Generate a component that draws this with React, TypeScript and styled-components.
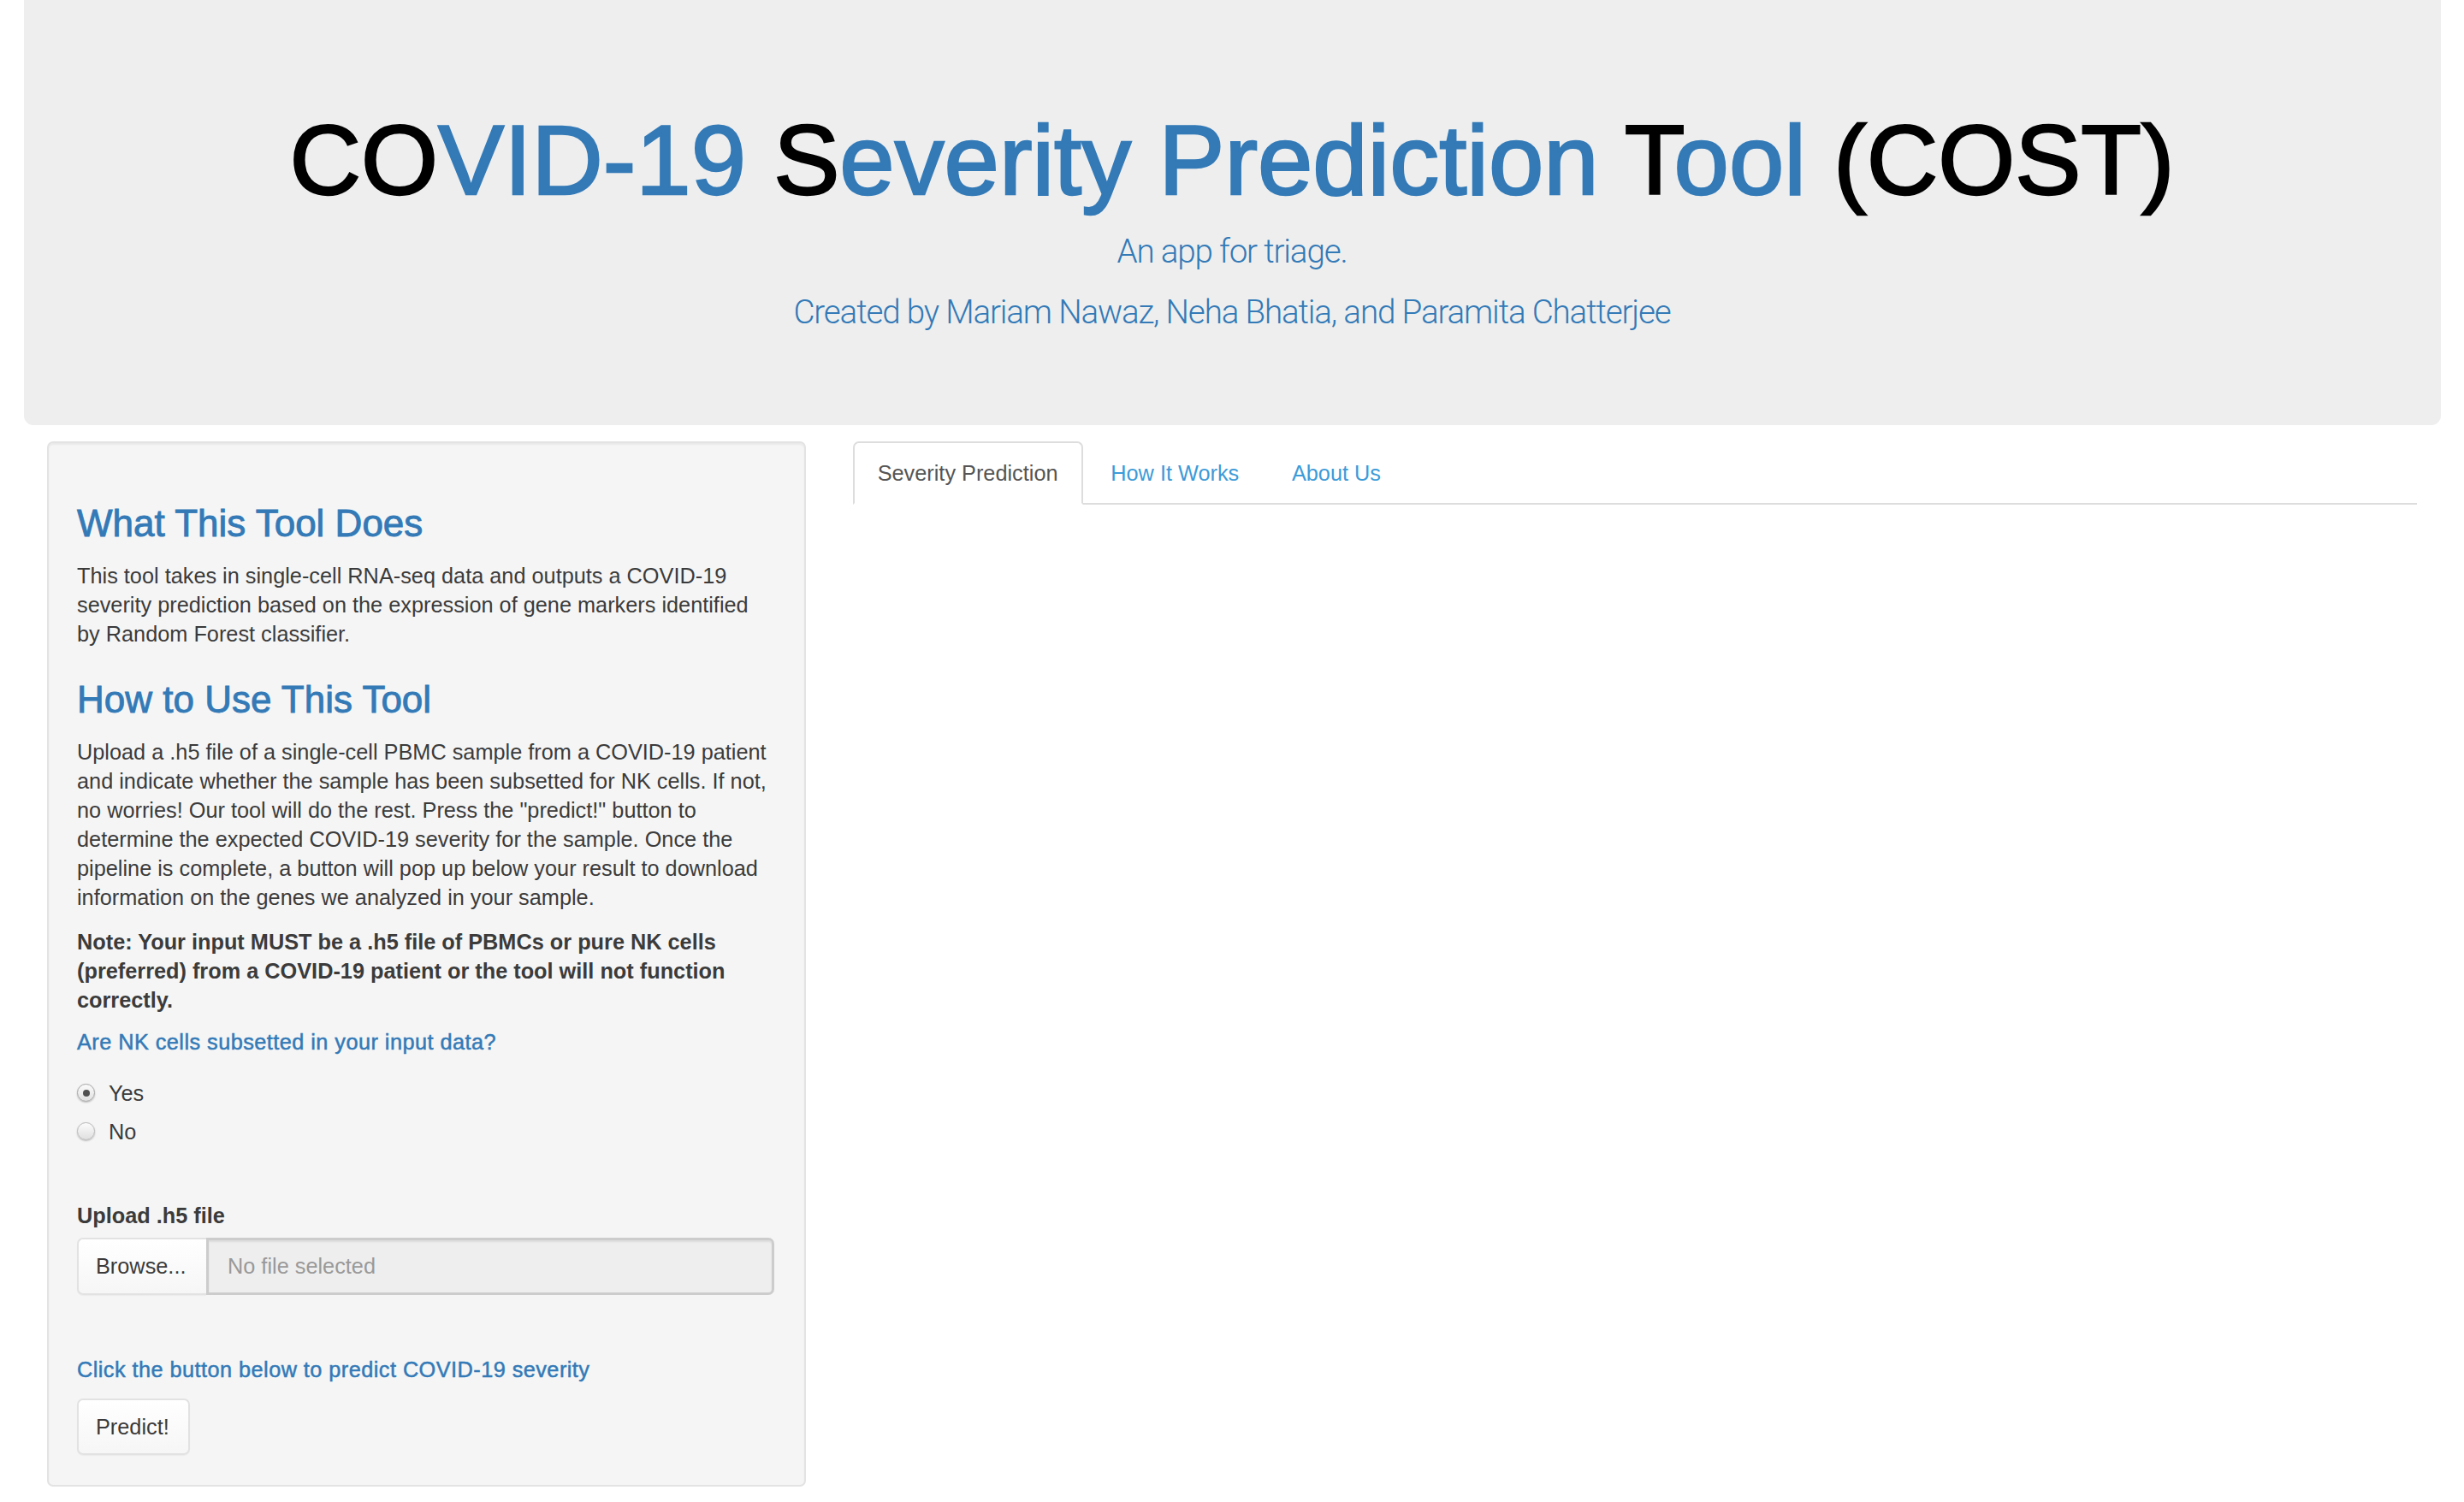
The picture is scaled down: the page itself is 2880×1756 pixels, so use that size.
import React from "react";
import styled, { createGlobalStyle } from "styled-components";

const GlobalStyle = createGlobalStyle`
  *, *::before, *::after { box-sizing: border-box; }
  html, body { margin: 0; padding: 0; background: #ffffff; }
  body {
    font-family: "Liberation Sans", Arial, Helvetica, sans-serif;
    color: #3b3b3b;
    font-size: 25.3px;
    line-height: 34px;
  }
`;

const Page = styled.div`
  padding: 0 27.5px;
`;

const Jumbotron = styled.header`
  background: #eeeeee;
  border-radius: 0 0 11px 11px;
  padding: 123px 0 110px;
  text-align: center;
`;

const Title = styled.h1`
  margin: 0;
  font-size: 115.7px;
  line-height: 128px;
  font-weight: 400;
  color: #000000;
`;

const Ink = styled.span<{ $tone: "dark" | "blue" }>`
  color: ${(p) => (p.$tone === "blue" ? "#337ab7" : "#000000")};
  -webkit-text-stroke: 2.4px ${(p) => (p.$tone === "blue" ? "#337ab7" : "#000000")};
`;

const Tagline = styled.p<{ $gap: number }>`
  margin: ${(p) => p.$gap}px 0 0;
  font-family: Roboto, "Liberation Sans", Arial, sans-serif;
  font-weight: 300;
  font-size: 38.6px;
  line-height: 44px;
  letter-spacing: -1.15px;
  color: #337ab7;
`;

const Row = styled.main`
  display: flex;
  margin-top: 19px;
`;

const Column = styled.section<{ $span: number }>`
  flex: 0 0 ${(p) => (p.$span / 12) * 100}%;
  max-width: ${(p) => (p.$span / 12) * 100}%;
  padding: 0 27.5px;
`;

const Well = styled.aside`
  display: flex;
  flex-direction: column;
  align-items: flex-start;
  background: #f5f5f5;
  border: 2px solid #e3e3e3;
  border-radius: 7px;
  box-shadow: inset 0 2px 2px rgba(0, 0, 0, 0.05);
  padding: 35px 35px 35px 33px;
`;

const SectionHeading = styled.h3<{ $gap: number }>`
  margin: ${(p) => p.$gap}px 0 0;
  font-size: 44px;
  line-height: 48px;
  font-weight: 400;
  color: #337ab7;
  -webkit-text-stroke: 0.9px #337ab7;
`;

const Paragraph = styled.p<{ $gap: number; $bold?: boolean }>`
  margin: ${(p) => p.$gap}px 0 0;
  font-size: 25.3px;
  line-height: 34px;
  font-weight: ${(p) => (p.$bold ? 700 : 400)};
  color: #3b3b3b;
`;

const FieldLabel = styled.div<{ $gap: number; $tone: "blue" | "dark" }>`
  margin-top: ${(p) => p.$gap}px;
  font-size: 25.3px;
  line-height: 34px;
  font-weight: ${(p) => (p.$tone === "dark" ? 700 : 400)};
  letter-spacing: ${(p) => (p.$tone === "blue" ? "0.45px" : "0")};
  color: ${(p) => (p.$tone === "blue" ? "#337ab7" : "#3b3b3b")};
  -webkit-text-stroke: ${(p) => (p.$tone === "blue" ? "0.5px #337ab7" : "0")};
`;

const RadioOption = styled.label<{ $gap: number }>`
  margin-top: ${(p) => p.$gap}px;
  display: flex;
  align-items: center;
  gap: 16px;
  font-size: 25.3px;
  line-height: 34px;
  color: #3b3b3b;
`;

const RadioCircle = styled.span<{ $checked?: boolean }>`
  width: 21px;
  height: 21px;
  border-radius: 50%;
  border: 1px solid ${(p) => (p.$checked ? "#a5a5a5" : "#b9b9b9")};
  background: linear-gradient(#fbfbfb, #e0e0e0);
  box-shadow: 0 1px 2px rgba(0, 0, 0, 0.25);
  display: flex;
  align-items: center;
  justify-content: center;
  &::after {
    content: "";
    display: ${(p) => (p.$checked ? "block" : "none")};
    width: 8px;
    height: 8px;
    border-radius: 50%;
    background: #4f4f4f;
  }
`;

const FileGroup = styled.div`
  align-self: stretch;
  margin-top: 9px;
  display: flex;
  height: 67px;
`;

const BrowseButton = styled.button`
  flex: 0 0 151px;
  font-family: inherit;
  font-size: 25.3px;
  line-height: 34px;
  color: #3b3b3b;
  text-align: left;
  padding: 0 0 0 20px;
  background: linear-gradient(#ffffff, #f6f6f6);
  border: 2px solid #e2e2e2;
  border-right: none;
  border-radius: 7px 0 0 7px;
  box-shadow: 0 1px 1px rgba(0, 0, 0, 0.04);
`;

const FileField = styled.div`
  flex: 1;
  display: flex;
  align-items: center;
  padding-left: 22px;
  background: #eeeeee;
  border: 3px solid #cccccc;
  border-radius: 0 7px 7px 0;
  box-shadow: inset 0 2px 2px rgba(0, 0, 0, 0.075);
  color: #999999;
  font-size: 25.3px;
  line-height: 34px;
`;

const ActionButton = styled.button<{ $gap: number }>`
  margin-top: ${(p) => p.$gap}px;
  width: 132px;
  height: 66px;
  font-family: inherit;
  font-size: 25.3px;
  line-height: 34px;
  color: #3b3b3b;
  text-align: left;
  padding: 0 0 0 20px;
  background: linear-gradient(#ffffff, #f6f6f6);
  border: 2px solid #e2e2e2;
  border-radius: 7px;
  box-shadow: 0 1px 1px rgba(0, 0, 0, 0.04);
`;

const TabList = styled.ul`
  display: flex;
  list-style: none;
  margin: 0;
  padding: 0;
  border-bottom: 2px solid #dddddd;
`;

const TabItem = styled.li<{ $active?: boolean }>`
  margin: 0 3.7px -2px 0;
  padding: 18px 27px;
  font-size: 25.3px;
  line-height: 34px;
  color: ${(p) => (p.$active ? "#555555" : "#3d9bd8")};
  background: ${(p) => (p.$active ? "#ffffff" : "transparent")};
  border: 2px solid ${(p) => (p.$active ? "#dddddd" : "transparent")};
  border-bottom-color: transparent;
  border-radius: 7px 7px 0 0;
  cursor: pointer;
`;

export default function App() {
  return (
    <>
      <GlobalStyle />
      <Page>
        <Jumbotron>
          <Title>
            <Ink $tone="dark">CO</Ink>
            <Ink $tone="blue">VID-19 </Ink>
            <Ink $tone="dark">S</Ink>
            <Ink $tone="blue">everity Prediction </Ink>
            <Ink $tone="dark">T</Ink>
            <Ink $tone="blue">ool</Ink>
            <Ink $tone="dark"> (COST)</Ink>
          </Title>
          <Tagline $gap={20.5}>An app for triage.</Tagline>
          <Tagline $gap={27}>Created by Mariam Nawaz, Neha Bhatia, and Paramita Chatterjee</Tagline>
        </Jumbotron>

        <Row>
          <Column $span={4}>
            <Well>
              <SectionHeading $gap={35}>What This Tool Does</SectionHeading>
              <Paragraph $gap={20}>
                This tool takes in single-cell RNA-seq data and outputs a COVID-19 severity prediction
                based on the expression of gene markers identified by Random Forest classifier.
              </Paragraph>
              <SectionHeading $gap={36}>How to Use This Tool</SectionHeading>
              <Paragraph $gap={20}>
                Upload a .h5 file of a single-cell PBMC sample from a COVID-19 patient and indicate
                whether the sample has been subsetted for NK cells. If not, no worries! Our tool will do
                the rest. Press the "predict!" button to determine the expected COVID-19 severity for the
                sample. Once the pipeline is complete, a button will pop up below your result to
                download information on the genes we analyzed in your sample.
              </Paragraph>
              <Paragraph $gap={18.5} $bold>
                Note: Your input MUST be a .h5 file of PBMCs or pure NK cells (preferred) from a
                COVID-19 patient or the tool will not function correctly.
              </Paragraph>
              <FieldLabel $gap={14.7} $tone="blue">
                Are NK cells subsetted in your input data?
              </FieldLabel>
              <RadioOption $gap={26.3}>
                <RadioCircle $checked />
                Yes
              </RadioOption>
              <RadioOption $gap={10.7}>
                <RadioCircle />
                No
              </RadioOption>
              <FieldLabel $gap={64.3} $tone="dark">
                Upload .h5 file
              </FieldLabel>
              <FileGroup>
                <BrowseButton type="button">Browse...</BrowseButton>
                <FileField>No file selected</FileField>
              </FileGroup>
              <FieldLabel $gap={70} $tone="blue">
                Click the button below to predict COVID-19 severity
              </FieldLabel>
              <ActionButton type="button" $gap={16.8}>
                Predict!
              </ActionButton>
            </Well>
          </Column>
          <Column $span={8}>
            <TabList>
              <TabItem $active>Severity Prediction</TabItem>
              <TabItem>How It Works</TabItem>
              <TabItem>About Us</TabItem>
            </TabList>
          </Column>
        </Row>
      </Page>
    </>
  );
}
